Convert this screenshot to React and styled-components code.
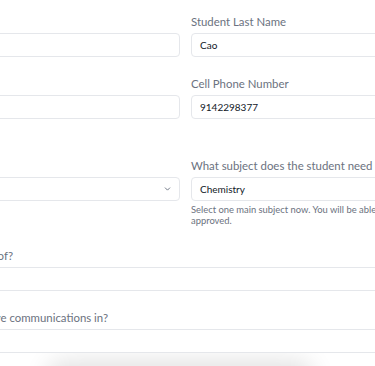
import React from "react";
import styled, { createGlobalStyle } from "styled-components";
import { ChevronDown } from "lucide-react";

const GlobalStyle = createGlobalStyle`
  html, body {
    margin: 0;
    padding: 0;
    background: #ffffff;
    overflow: hidden;
  }
  body {
    font-family: Lato, Inter, "Noto Sans", sans-serif;
  }
`;

const Page = styled.div`
  margin-left: -200px;
  padding-top: 15px;
`;

const Grid = styled.div`
  display: grid;
  grid-template-columns: 380px 380px;
  column-gap: 11px;
`;

const Field = styled.div`
  display: flex;
  flex-direction: column;
  grid-column: ${(p) => (p.$wide ? "1 / span 2" : "auto")};
  margin-bottom: ${(p) => p.$gap ?? 20}px;
`;

const Label = styled.label`
  font-size: 11.4px;
  line-height: 14px;
  color: #6b7280;
  margin-bottom: 4px;
  white-space: nowrap;
`;

const Box = styled.div`
  position: relative;
  height: 24px;
  box-sizing: border-box;
  border: 1px solid #e5e7eb;
  border-radius: 4px;
  background: #ffffff;
  display: flex;
  align-items: center;
  padding: 0 8px;
  font-size: 10px;
  color: #111827;
`;

const Chevron = styled.span`
  position: absolute;
  right: 7px;
  top: 50%;
  transform: translateY(-50%);
  display: flex;
  color: #6b7280;
`;

const Help = styled.p`
  margin: 3px 0 0;
  font-size: 9.4px;
  line-height: 11px;
  color: #6b7280;
`;

const Footer = styled.div`
  width: 250px;
  height: 40px;
  margin-left: 255px;
  margin-top: 16px;
  border-radius: 8px;
  background: #ffffff;
  box-shadow: 0 0 24px 8px rgba(0, 0, 0, 0.12);
`;

export default function App() {
  return (
    <>
      <GlobalStyle />
      <Page>
        <Grid>
          <Field>
            <Label>Student First Name</Label>
            <Box>Leo</Box>
          </Field>
          <Field>
            <Label>Student Last Name</Label>
            <Box>Cao</Box>
          </Field>
          <Field $gap={40}>
            <Label>Email</Label>
            <Box>leo@cao.com</Box>
          </Field>
          <Field $gap={40}>
            <Label>Cell Phone Number</Label>
            <Box>9142298377</Box>
          </Field>
          <Field $gap={23}>
            <Label>Grade</Label>
            <Box>
              <Chevron>
                <ChevronDown size={9} strokeWidth={2.5} />
              </Chevron>
            </Box>
          </Field>
          <Field $gap={23}>
            <Label>What subject does the student need help with?</Label>
            <Box>Chemistry</Box>
            <Help>
              Select one main subject now. You will be able to add more subjects
              once
              <br />
              approved.
            </Help>
          </Field>
          <Field $wide>
            <Label>What school district is the student part of?</Label>
            <Box />
          </Field>
          <Field $wide $gap={0}>
            <Label>Which language would you like to receive communications in?</Label>
            <Box />
          </Field>
        </Grid>
        <Footer />
      </Page>
    </>
  );
}
